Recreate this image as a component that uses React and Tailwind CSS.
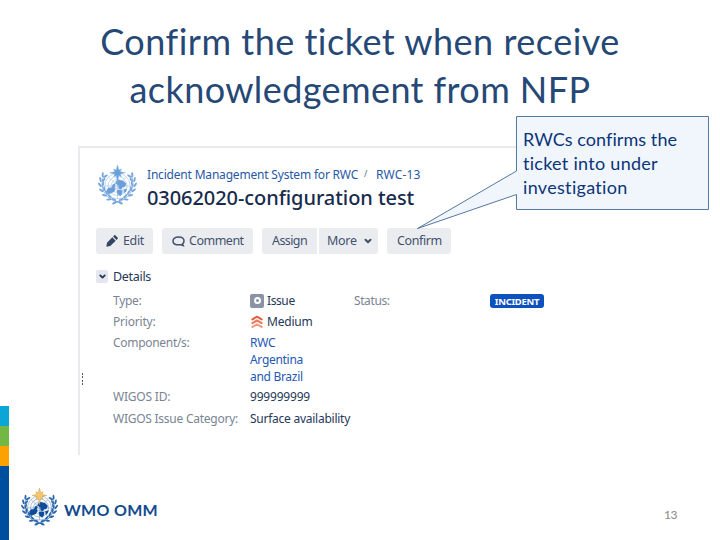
import { ChevronDown } from "lucide-react"

const Leaves = ({ color }) => {
    const leaves = [
        [17, 37, -8], [12, 34, 18], [8, 30, 38], [5, 25.5, 60], [3.5, 20.5, 80], [4, 15.5, 100], [6, 11, 120],
    ]

    return (
        <g fill={color}>
            {leaves.map(([x, y, r], index) => (
                <g key={index} transform={`translate(${x} ${y}) rotate(${r})`}>
                    <ellipse cx="-1.2" cy="-1.3" rx="2.7" ry="1.05" transform="rotate(28)" />
                    <ellipse cx="-1" cy="1.3" rx="2.7" ry="1.05" transform="rotate(-24)" />
                </g>
            ))}
            <path d="M23 38.5C12 37 5 30 4 20c0-3 .5-6 2-9" fill="none" stroke={color} strokeWidth="0.7" />
        </g>
    )
}

const Emblem = ({ color, land, star, starEdge, className }) => {
    return (
        <svg viewBox="0 0 40 42" className={className}>
            <g fill="none" stroke={color} strokeWidth="0.6" opacity="0.7">
                <circle cx="20" cy="21.5" r="13" />
                <circle cx="20" cy="21.5" r="9.8" />
                <circle cx="20" cy="21.5" r="6.6" />
                <circle cx="20" cy="21.5" r="3.3" />
                <path d="M20 8.5v26M7 21.5h26M10.8 12.3l18.4 18.4M29.2 12.3L10.8 30.7" />
            </g>
            <g fill={land}>
                <path d="M9 25l2-2 3 0 1-3 2-1 1 2-1 2 1 2-2 3-3 1-2 1-2-2z" />
                <path d="M18 17l3-2 5 1 3 3-1 3-3 1-1 2-3-1 0-3-3-2z" />
                <path d="M19 26l3-1 3 1 0 3-2 3-3-2z" />
                <path d="M26 25l4-1-1 3-2 2z" />
            </g>
            <Leaves color={color} />
            <g transform="translate(40 0) scale(-1 1)">
                <Leaves color={color} />
            </g>
            <path d="M16 40l4-2.500 4 2.500" fill="none" stroke={color} strokeWidth="1.1" />
            <path
                d="M20 0l1.300 5.200L24 4l-1.200 2.800L28 8l-5.200 1.200L24 12l-2.700-1.200L20 18l-1.300-7.200L16 12l1.200-2.800L12 8l5.200-1.200L16 4l2.700 1.200z"
                fill={star} stroke={starEdge} strokeWidth="0.5"
            />
        </svg>
    )
}

const Pencil = () => (
    <svg viewBox="0 0 12 12" className="w-3 h-3 shrink-0" fill="#344563">
        <path d="M0.3 11.7l.7-4L6.300 2.300l3.400 3.400-5.400 5.300zM7.100 1.500L8.200.4c.4-.4.9-.4 1.300 0l2.100 2.100c.4.4.4.9 0 1.300l-1.100 1.100z" />
    </svg>
)

const Bubble = () => (
    <svg viewBox="0 0 13 12" className="w-[13px] h-3 shrink-0" fill="none" stroke="#42526e" strokeWidth="1.500">
        <path d="M4.500 9.700C2.300 9.300 1 7.900 1 6c0-2.300 2.200-4 5.500-4S12 3.700 12 6c0 1.300-.6 2.200-1.500 2.900l.7 1.600-2.400-.8z" />
    </svg>
)

const PriorityIcon = () => (
    <svg viewBox="0 0 12 13" className="w-3 h-[13px] shrink-0" fill="none" strokeWidth="2.100" strokeLinecap="round" strokeLinejoin="round">
        <path d="M1.400 4.300L6 1.700l4.600 2.600" stroke="#e0603f" />
        <path d="M1.400 8.100L6 5.500l4.600 2.600" stroke="#ea7b5c" />
        <path d="M1.400 11.900L6 9.300l4.600 2.600" stroke="#f09a80" />
    </svg>
)

const Stripe = () => (
    <div className="flex flex-col w-[9px] h-[134px]">
        <span className="h-5 bg-[#0ba5d6]" />
        <span className="h-5 bg-[#72b843]" />
        <span className="h-5 bg-[#fba200]" />
        <span className="grow bg-[#004f9f]" />
    </div>
)

const Toolbar = () => {
    return (
        <div className="flex h-[26px] text-[12.5px] text-[#42526e]">
            <button className="flex items-center w-[57px] pl-2.5 gap-[5px] bg-[#ebecf0] rounded-[3px] tracking-[-0.35px]"><Pencil />Edit</button>
            <button className="flex items-center w-[91px] ml-[9px] pl-2.5 gap-[4px] bg-[#ebecf0] rounded-[3px] tracking-[-0.5px]"><Bubble />Comment</button>
            <button className="flex items-center w-[55px] ml-[9px] pl-2.5 bg-[#ebecf0] rounded-l-[3px] tracking-[-0.6px]">Assign</button>
            <button className="flex items-center w-[59px] ml-[2px] pl-2 gap-1.5 bg-[#ebecf0] rounded-r-[3px] tracking-[-0.3px]">
                More<ChevronDown size={10} strokeWidth={5} />
            </button>
            <button className="flex items-center w-16 ml-[9px] pl-2.5 bg-[#ebecf0] rounded-[3px] tracking-[-0.4px]">Confirm</button>
        </div>
    )
}

const Label = ({ children }) => (
    <span className="w-[137px] shrink-0 text-[#7a8493]">{children}</span>
)

const Details = () => {
    return (
        <div className="flex flex-col text-[12px] leading-[21px] text-[#253858] whitespace-nowrap">
            <div className="flex items-center h-[13px] gap-[5px]">
                <span className="flex items-center justify-center w-3 h-[13px] bg-[#e4e7ef] rounded-[2px]">
                    <ChevronDown size={9} strokeWidth={5} />
                </span>
                <h2 className="text-[12.5px] tracking-[-0.3px]">Details</h2>
            </div>
            <div className="flex flex-col pl-[17px] pt-[7px]">
                <div className="flex h-[21px] tracking-[-0.3px]">
                    <Label>Type:</Label>
                    <span className="flex items-center w-[104px] gap-[3px] tracking-[-0.4px]">
                        <span className="flex items-center justify-center w-3.5 h-3.5 bg-[#8993a4] rounded-[2px]">
                            <span className="w-[7px] h-[7px] border-2 border-white rounded-full" />
                        </span>
                        Issue
                    </span>
                    <span className="w-[136px] text-[#7a8493] tracking-[-0.4px]">Status:</span>
                    <span className="flex items-center justify-center w-[54px] h-3.5 mt-1 bg-[#0c51bd] text-white text-[9.5px] font-bold rounded-[3px]">INCIDENT</span>
                </div>
                <div className="flex h-[21px] tracking-[-0.2px]">
                    <Label>Priority:</Label>
                    <span className="flex items-center gap-1 pl-px"><PriorityIcon />Medium</span>
                </div>
                <div className="flex h-[54px] tracking-[-0.3px]">
                    <Label>Component/s:</Label>
                    <span className="pt-[2px] leading-[17px] text-[#2458b3]">RWC<br />Argentina<br />and Brazil</span>
                </div>
                <div className="flex h-[22px] tracking-[-0.2px]">
                    <Label>WIGOS ID:</Label>
                    <span>999999999</span>
                </div>
                <div className="flex h-[21px] tracking-[-0.25px]">
                    <Label>WIGOS Issue Category:</Label>
                    <span>Surface availability</span>
                </div>
            </div>
        </div>
    )
}

const IssuePanel = () => {
    return (
        <div className="flex w-[536px] h-[309px] border-t-2 border-l-2 border-[#e9eaed] font-['Noto_Sans',sans-serif]">
            <div className="flex flex-col justify-between w-[3px] h-3 mt-[225px] items-end">
                {[0, 1, 2, 3].map((dot) => <span key={dot} className="w-px h-[2px] bg-[#555]" />)}
            </div>
            <div className="flex flex-col pl-[13px] pt-[17px]">
                <div className="flex gap-2.5 h-[63px] pl-[2px]">
                    <Emblem className="w-[39px] h-[41px]" color="#78a7dd" land="#6c9fda" star="#6a9fd8" starEdge="#83b4e6" />
                    <div className="flex flex-col whitespace-nowrap">
                        <div className="flex h-5 text-[12px] leading-5 text-[#2858a5]">
                            <span className="w-[217px] tracking-[-0.19px]">Incident Management System for RWC</span>
                            <span className="w-[12px] text-[9px] leading-[17px] text-[#5e6c84]">/</span>
                            <span className="tracking-[0.15px]">RWC-13</span>
                        </div>
                        <h2 className="text-[20px] leading-[26px] font-medium text-[#172b4d] tracking-[-0.07px]">03062020-configuration test</h2>
                    </div>
                </div>
                <Toolbar />
                <div className="pt-4">
                    <Details />
                </div>
            </div>
        </div>
    )
}

const Callout = () => {
    return (
        <div className="absolute left-[415px] top-[115px] w-[296px] h-[115px]">
            <svg viewBox="0 0 296 115" className="absolute inset-0 w-full h-full">
                <path d="M101.500 1.500H293.500V94.500H101.500V79.500L2.500 113.500L101.500 56V1.500Z" fill="#edf4fc" fillOpacity="0.85" stroke="#55789f" strokeWidth="1" />
            </svg>
            <p className="relative flex flex-col pl-[108px] pt-3 text-[18px] leading-6 text-[#0b3479] whitespace-nowrap">
                <span className="tracking-[0.07px]">RWCs confirms the</span>
                <span className="tracking-[0.28px]">ticket into under</span>
                <span className="tracking-[0.32px]">investigation</span>
            </p>
        </div>
    )
}

const App = () => {
    return (
        <div className="relative flex flex-col w-[720px] h-[540px] overflow-hidden bg-white font-[Lato,sans-serif]">
            <h1 className="h-[146px] pt-[17px] text-center text-[36px] leading-[48px] text-[#254876] whitespace-nowrap">
                <span className="tracking-[0.5px]">Confirm the ticket when receive</span><br />
                <span className="tracking-[0.4px]">acknowledgement from NFP</span>
            </h1>
            <div className="flex grow">
                <div className="flex flex-col justify-end w-[78px]">
                    <Stripe />
                </div>
                <IssuePanel />
            </div>
            <footer className="absolute left-[21px] bottom-3 w-[656px] h-[41px] flex items-center">
                <Emblem className="w-[37px] h-[41px]" color="#2b66aa" land="#0d4c9b" star="#f4c76c" starEdge="#c99a48" />
                <span className="pl-[6px] pt-1 text-[16px] leading-5 font-bold text-[#124a8f] tracking-[0.3px]">WMO OMM</span>
                <span className="ml-auto pt-3.5 text-[12px] leading-4 text-[#898989] tracking-[-0.5px]">13</span>
            </footer>
            <Callout />
        </div>
    )
}

export default App;
